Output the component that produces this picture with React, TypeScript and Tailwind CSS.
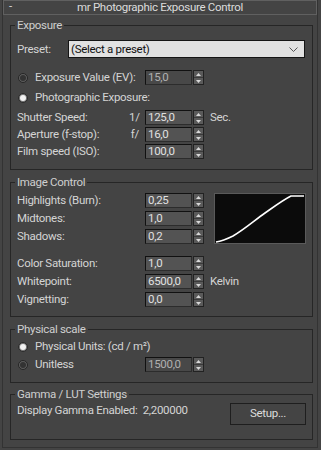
import React from "react";

const Spinner = () => (
  <div className="ml-[1px] flex h-[15px] w-[11px] shrink-0 flex-col border border-[#222] bg-[#5a5a5a]">
    <div className="flex flex-1 items-center justify-center border-b border-[#3a3a3a]">
      <svg width="5" height="3" viewBox="0 0 5 3">
        <path d="M0 3 L2.5 0 L5 3 Z" fill="#d8d8d8" />
      </svg>
    </div>
    <div className="flex flex-1 items-center justify-center">
      <svg width="5" height="3" viewBox="0 0 5 3">
        <path d="M0 0 L2.5 3 L5 0 Z" fill="#d8d8d8" />
      </svg>
    </div>
  </div>
);

const NumField = ({ value, disabled }: { value: string; disabled?: boolean }) => (
  <div className="flex shrink-0 items-center">
    <div
      className={
        "flex h-[15px] w-[47px] items-center border-t border-l border-b border-r border-t-[#111] border-l-[#111] border-b-[#2c2c2c] border-r-[#2c2c2c] pl-[2px] leading-[13px] " +
        (disabled ? "bg-[#484848] text-[#b0b0b0]" : "bg-[#535353] text-[#e0e0e0]")
      }
    >
      {value}
    </div>
    <Spinner />
  </div>
);

const Radio = ({ checked }: { checked?: boolean }) =>
  checked ? (
    <div className="flex h-[10px] w-[10px] shrink-0 items-center justify-center rounded-full border border-[#2a2a2a] bg-[#7a7a7a]">
      <div className="h-[6px] w-[6px] rounded-full bg-[#f2f2f2]" />
    </div>
  ) : (
    <div className="flex h-[10px] w-[10px] shrink-0 items-center justify-center rounded-full border border-[#262626] bg-[#5e5e5e]">
      <div className="h-[6px] w-[6px] rounded-full bg-[#333]" />
    </div>
  );

const Group = ({
  title,
  className,
  children,
}: {
  title: string;
  className?: string;
  children: React.ReactNode;
}) => (
  <div className={"ml-[7px] w-[303px] border border-[#262626] pl-[6px] pr-[6px] " + (className ?? "")}>
    <div className="-mt-[8px] ml-[-2px] h-[14px] w-fit whitespace-nowrap bg-[#444] px-[2px] leading-[14px] text-[#cfcfcf]">
      {title}
    </div>
    {children}
  </div>
);

const Row = ({
  label,
  prefix,
  value,
  suffix,
  className,
  disabled,
}: {
  label: string;
  prefix?: string;
  value: string;
  suffix?: string;
  className?: string;
  disabled?: boolean;
}) => (
  <div className={"flex h-[15px] items-center " + (className ?? "")}>
    <span className="w-[112px] shrink-0 whitespace-nowrap leading-[15px]">{label}</span>
    <span className="w-[16px] shrink-0 pr-[6px] text-right leading-[15px]">{prefix ?? ""}</span>
    <NumField value={value} disabled={disabled} />
    {suffix && <span className="ml-[6px] whitespace-nowrap leading-[15px]">{suffix}</span>}
  </div>
);

export default function App() {
  return (
    <div
      className="h-[450px] w-[321px] overflow-hidden bg-[#444] text-[11.5px] tracking-[-0.3px] text-[#d4d4d4]"
      style={{ fontFamily: "Roboto, 'Liberation Sans', sans-serif" }}
    >
      <div className="ml-[2px] h-[448px] w-[316px] border-r border-l border-b border-[#333]">
        {/* Title bar */}
        <div className="relative flex h-[15px] w-[314px] items-center justify-center border border-[#606060] bg-[#444] leading-[13px] text-[#dcdcdc]">
          <span className="absolute left-[5px] top-[-1px]">-</span>
          <span className="whitespace-nowrap">mr Photographic Exposure Control</span>
        </div>

        {/* Exposure */}
        <Group title="Exposure" className="mt-[10px] pb-[10px]">
          <div className="mt-[8px] flex h-[18px] items-center">
            <span className="w-[51px] shrink-0 leading-[18px]">Preset:</span>
            <div className="flex h-[18px] w-[237px] items-center justify-between border border-[#151515] bg-[#e1e1e1] pl-[2px] pr-[6px] text-[#111]">
              <span className="whitespace-nowrap leading-[16px]">(Select a preset)</span>
              <svg width="9" height="5" viewBox="0 0 9 5">
                <path d="M0.5 0.5 L4.5 4.5 L8.5 0.5" stroke="#555" strokeWidth="1" fill="none" />
              </svg>
            </div>
          </div>
          <div className="mt-[12px] flex h-[15px] items-center">
            <div className="ml-[1px] w-[17px] shrink-0">
              <Radio />
            </div>
            <span className="w-[110px] shrink-0 whitespace-nowrap leading-[15px]">Exposure Value (EV):</span>
            <NumField value="15,0" disabled />
          </div>
          <div className="mt-[5px] flex h-[15px] items-center">
            <div className="ml-[1px] w-[17px] shrink-0">
              <Radio checked />
            </div>
            <span className="whitespace-nowrap leading-[15px]">Photographic Exposure:</span>
          </div>
          <Row className="mt-[5px]" label="Shutter Speed:" prefix="1/" value="125,0" suffix="Sec." />
          <Row className="mt-[2px]" label="Aperture (f-stop):" prefix="f/" value="16,0" />
          <Row className="mt-[2px]" label="Film speed (ISO):" value="100,0" />
        </Group>

        {/* Image Control */}
        <Group title="Image Control" className="mt-[12px] pb-[9px]">
          <div className="mt-[4px] flex items-start">
            <div className="flex flex-col gap-[3px]">
              <Row label="Highlights (Burn):" value="0,25" />
              <Row label="Midtones:" value="1,0" />
              <Row label="Shadows:" value="0,2" />
            </div>
            <div className="ml-[10px] h-[51px] w-[92px] shrink-0 border border-[#5a5a5a] bg-[#0b0b0b]">
              <svg width="90" height="49" viewBox="0 0 90 49">
                <path
                  d="M1 48 C 8 47, 12 45, 18 42 C 30 35, 40 26, 50 19 C 60 12, 68 6, 76 2 L 89 2"
                  stroke="#ffffff"
                  strokeWidth="1.6"
                  fill="none"
                />
              </svg>
            </div>
          </div>
          <div className="mt-[12px] flex flex-col gap-[3px]">
            <Row label="Color Saturation:" value="1,0" />
            <Row label="Whitepoint:" value="6500,0" suffix="Kelvin" />
            <Row label="Vignetting:" value="0,0" />
          </div>
        </Group>

        {/* Physical scale */}
        <Group title="Physical scale" className="mt-[12px] pb-[10px]">
          <div className="mt-[3px] flex h-[15px] items-center">
            <div className="ml-[1px] w-[17px] shrink-0">
              <Radio checked />
            </div>
            <span className="whitespace-nowrap leading-[15px]">Physical Units: (cd / m²)</span>
          </div>
          <div className="mt-[3px] flex h-[15px] items-center">
            <div className="ml-[1px] w-[17px] shrink-0">
              <Radio />
            </div>
            <span className="w-[110px] shrink-0 leading-[15px]">Unitless</span>
            <NumField value="1500,0" disabled />
          </div>
        </Group>

        {/* Gamma */}
        <Group title="Gamma / LUT Settings" className="mt-[11px] pb-[14px]">
          <div className="mt-[2px] flex items-start justify-between">
            <span className="whitespace-pre leading-[14px]">Display Gamma Enabled:  2,200000</span>
            <div className="flex h-[22px] w-[76px] shrink-0 items-center justify-center border border-[#1e1e1e] bg-[#444] text-[#dcdcdc]">
              Setup...
            </div>
          </div>
        </Group>
      </div>
    </div>
  );
}
